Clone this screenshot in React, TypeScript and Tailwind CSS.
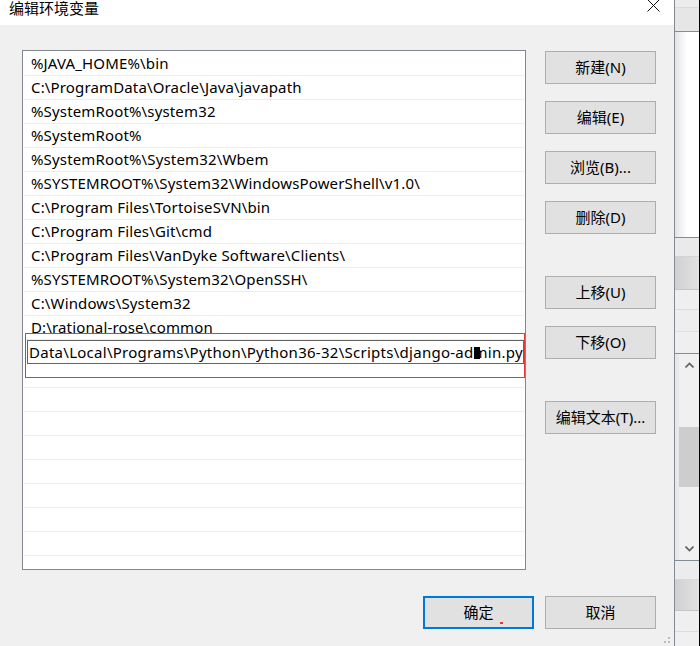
import React from "react";

const paths = [
	"%JAVA_HOME%\\bin",
	"C:\\ProgramData\\Oracle\\Java\\javapath",
	"%SystemRoot%\\system32",
	"%SystemRoot%",
	"%SystemRoot%\\System32\\Wbem",
	"%SYSTEMROOT%\\System32\\WindowsPowerShell\\v1.0\\",
	"C:\\Program Files\\TortoiseSVN\\bin",
	"C:\\Program Files\\Git\\cmd",
	"C:\\Program Files\\VanDyke Software\\Clients\\",
	"%SYSTEMROOT%\\System32\\OpenSSH\\",
	"C:\\Windows\\System32",
	"D:\\rational-rose\\common",
];

function SideButton({ label, className = "" }: { label: string; className?: string }) {
	return (
		<button
			type="button"
			className={`w-[111px] h-[33px] bg-[#e1e1e1] border border-[#adadad] text-[15px] text-black flex items-center justify-center ${className}`}
		>
			{label}
		</button>
	);
}

function Chevron({ up }: { up?: boolean }) {
	return (
		<svg width="9" height="6" viewBox="0 0 9 6" className="block">
			<path
				d={up ? "M0.5 5.5 L4.5 1.5 L8.5 5.5" : "M0.5 0.5 L4.5 4.5 L8.5 0.5"}
				fill="none"
				stroke="#606060"
				strokeWidth="1.6"
			/>
		</svg>
	);
}

// window lying behind the dialog, only a sliver is visible
function BackWindow() {
	return (
		<div className="w-[25px] h-[646px] flex flex-col border-r border-black bg-[#f0f0f0]">
			<div className="h-[8px] bg-[#ececec] border-b border-[#dadada]" />
			<div className="h-[23px] bg-[#e6e6e6]" />
			<div className="h-[207px] border-y border-[#838d99] bg-gradient-to-r from-[#e4e4e4] via-white to-white" />
			<div className="h-[19px] bg-[#eaeaea] border-b border-[#d4d4d4]" />
			<div className="h-[33px] bg-gradient-to-r from-[#d0d0d0] to-[#e2e2e2] border-b border-[#c6c6c6]" />
			<div className="h-[20px] bg-[#efefef] border-b border-[#dcdcdc]" />
			<div className="h-[22px] bg-[#eeeeee] border-b border-[#e0e0e0]" />
			<div className="h-[21px] bg-[#efefef]" />
			<div className="h-[208px] border-y border-[#838d99] bg-[#f0f0f0] flex">
				<div className="w-[4px] bg-[#e8e8e8]" />
				<div className="flex-1 flex flex-col items-center">
					<div className="pt-[8px] h-[20px]">
						<Chevron up />
					</div>
					<div className="mt-[53px] h-[60px] self-stretch bg-[#cdcdcd]" />
					<div className="flex-1" />
					<div className="pb-[8px]">
						<Chevron />
					</div>
				</div>
			</div>
			<div className="h-[19px] bg-[#ececec] border-b border-[#d8d8d8]" />
			<div className="h-[31px] bg-gradient-to-r from-[#d0d0d0] to-[#e2e2e2] border-b border-[#c6c6c6]" />
			<div className="h-[21px] bg-[#efefef] border-b border-[#dcdcdc]" />
			<div className="flex-1 bg-[#f0f0f0]" />
		</div>
	);
}

export default function App() {
	const emptyRows = Array.from({ length: 9 });

	return (
		<div className="w-[700px] h-[646px] flex overflow-hidden font-['Noto_Sans','Noto_Sans_CJK_SC',sans-serif] text-black">
			<div className="relative w-[675px] h-[646px] flex flex-col bg-[#f0f0f0] border-r border-[#7e8a96]">
				{/* title bar */}
				<div className="h-[25px] bg-white flex items-start justify-between pl-[9px] pr-[14px] overflow-hidden">
					<span className="text-[15px] leading-[15px] font-['Noto_Sans_CJK_SC',sans-serif]">编辑环境变量</span>
					<svg width="13" height="13" viewBox="0 0 13 13" className="-mt-[1px]">
						<path d="M0.5 0.5 L12.5 12.5 M12.5 0.5 L0.5 12.5" stroke="#111" strokeWidth="1" />
					</svg>
				</div>

				<div className="flex pl-[22px] pt-[25px]">
					{/* path list */}
					<div className="relative w-[504px] h-[520px] bg-white border border-[#82878f] pt-px overflow-hidden">
						{paths.map((p) => (
							<div
								key={p}
								className="h-[24px] mx-px border-b border-[#ededed] flex items-center pl-[7px] text-[15px] tracking-[0.15px] whitespace-nowrap"
							>
								{p}
							</div>
						))}
						<div className="h-[24px] pl-[4px] pr-px">
							<div className="h-[24px] border border-[#646464] flex items-center overflow-hidden text-[15px] tracking-[0.27px] whitespace-nowrap pl-[1px]">
								Data\Local\Programs\Python\Python36-32\Scripts\django-ad
								<span className="relative">
									m
									<span className="absolute left-0 top-[6px] w-[6px] h-[12px] bg-black" />
								</span>
								in.py
							</div>
						</div>
						{emptyRows.map((_, i) => (
							<div key={i} className="h-[24px] mx-px border-b border-[#ededed]" />
						))}
						<div className="absolute left-[2px] top-[282px] w-[500px] h-[45px] border border-[#e53935]" />
					</div>

					{/* action buttons */}
					<div className="ml-[19px] pt-px flex flex-col gap-[17px]">
						<SideButton label="新建(N)" />
						<SideButton label="编辑(E)" />
						<SideButton label="浏览(B)..." />
						<SideButton label="删除(D)" />
						<SideButton label="上移(U)" className="mt-[25px]" />
						<SideButton label="下移(O)" />
						<SideButton label="编辑文本(T)..." className="mt-[25px]" />
					</div>
				</div>

				{/* footer */}
				<div className="flex justify-end gap-[11px] pr-[18px] mt-[26px]">
					<button
						type="button"
						className="relative w-[111px] h-[33px] bg-[#e1e1e1] border-2 border-[#0078d7] text-[15px] flex items-center justify-center"
					>
						确定
						<span className="absolute left-[75px] top-[24px] w-[3px] h-[2px] bg-[#e53935]" />
					</button>
					<button
						type="button"
						className="w-[111px] h-[33px] bg-[#e1e1e1] border border-[#adadad] text-[15px] flex items-center justify-center"
					>
						取消
					</button>
				</div>

				{/* size grip */}
				<div className="absolute right-[4px] bottom-[3px] w-[6px] h-[6px]">
					<span className="absolute right-0 top-0 w-[2px] h-[2px] bg-[#bcbcbc]" />
					<span className="absolute right-0 bottom-0 w-[2px] h-[2px] bg-[#bcbcbc]" />
					<span className="absolute left-0 bottom-0 w-[2px] h-[2px] bg-[#bcbcbc]" />
				</div>
			</div>
			<BackWindow />
		</div>
	);
}
